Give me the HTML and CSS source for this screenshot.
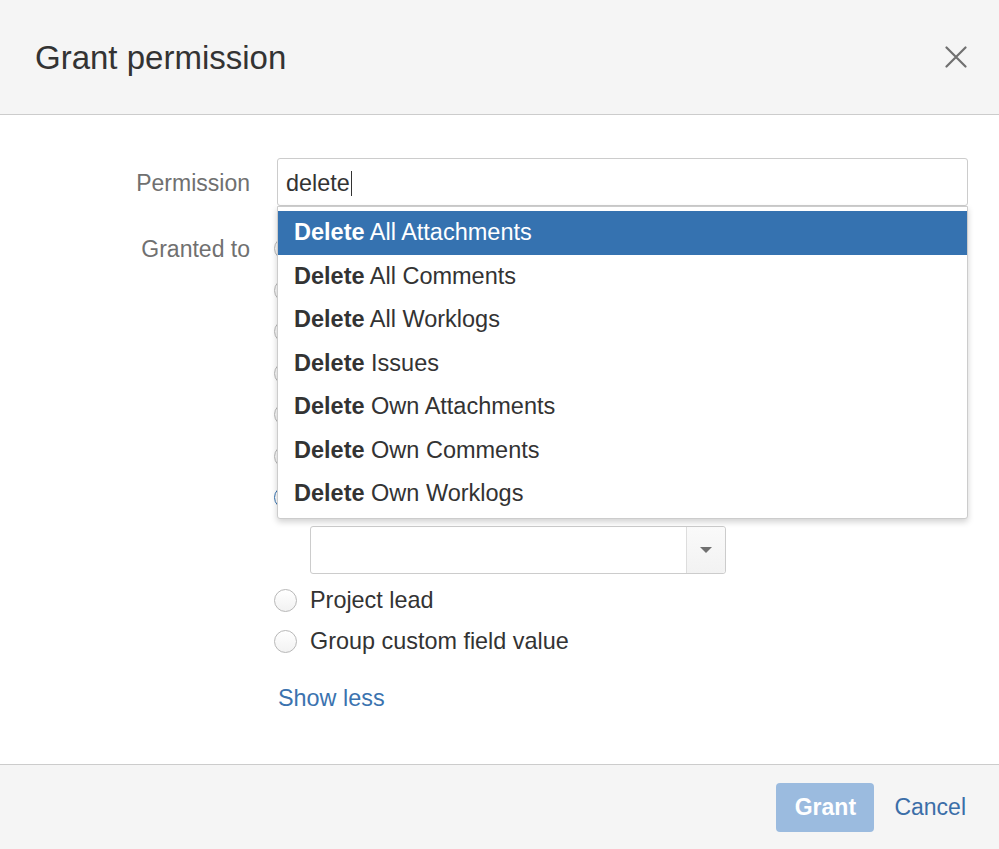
FILE: index.html
```html
<!DOCTYPE html>
<html lang="en">
<head>
<meta charset="utf-8">
<title>Grant permission</title>
<link rel="stylesheet" href="styles.css">
</head>
<body>
<div class="dialog">
  <header class="dlg-head">
    <h2 class="dlg-title">Grant permission</h2>
    <button class="close" aria-label="Close">
      <svg width="22" height="22" viewBox="0 0 22 22"><path d="M1.5 1.5 L20.5 20.5 M20.5 1.5 L1.5 20.5" stroke="#707070" stroke-width="2.2" fill="none" stroke-linecap="round"/></svg>
    </button>
  </header>
  <main class="dlg-body">
    <div class="row perm-row">
      <div class="lbl lbl-perm">Permission</div>
      <div class="field perm-field">
        <div class="input">delete<span class="caret"></span></div>
        <ul class="suggest">
          <li class="opt active"><b>Delete</b> All Attachments</li>
          <li class="opt"><b>Delete</b> All Comments</li>
          <li class="opt"><b>Delete</b> All Worklogs</li>
          <li class="opt"><b>Delete</b> Issues</li>
          <li class="opt"><b>Delete</b> Own Attachments</li>
          <li class="opt"><b>Delete</b> Own Comments</li>
          <li class="opt"><b>Delete</b> Own Worklogs</li>
        </ul>
      </div>
    </div>
    <div class="row grant-row">
      <div class="lbl lbl-grant">Granted to</div>
      <div class="field">
        <ul class="radios">
          <li class="radio"><span class="dot"></span></li>
          <li class="radio"><span class="dot"></span></li>
          <li class="radio"><span class="dot"></span></li>
          <li class="radio"><span class="dot"></span></li>
          <li class="radio"><span class="dot"></span></li>
          <li class="radio"><span class="dot"></span></li>
          <li class="radio"><span class="dot checked"></span></li>
        </ul>
        <div class="select">
          <span class="select-val"></span>
          <span class="select-arrow"><span class="tri"></span></span>
        </div>
        <ul class="radios">
          <li class="radio"><span class="dot"></span>Project lead</li>
          <li class="radio"><span class="dot"></span>Group custom field value</li>
        </ul>
        <a class="more" href="#">Show less</a>
      </div>
    </div>
  </main>
  <footer class="dlg-foot">
    <button class="btn-grant" disabled>Grant</button>
    <a class="cancel" href="#">Cancel</a>
  </footer>
</div>
</body>
</html>
```

FILE: styles.css
```css
* { box-sizing: border-box; }
html, body { margin: 0; padding: 0; }
body {
  font-family: "Liberation Sans", Arial, Helvetica, sans-serif;
  color: #333;
  background: #fff;
}
.dialog {
  width: 999px;
  height: 849px;
  display: flex;
  flex-direction: column;
  overflow: hidden;
}
.dlg-head {
  height: 115px;
  flex: none;
  background: #f5f5f5;
  border-bottom: 1px solid #cccccc;
  display: flex;
  align-items: center;
  justify-content: space-between;
  padding: 0 32px 0 35px;
}
.dlg-title {
  margin: 0;
  font-size: 33px;
  font-weight: normal;
  color: #333;
  line-height: 1;
  padding-top: 1px;
}
.close {
  border: 0;
  background: none;
  padding: 0;
  width: 22px;
  height: 22px;
  display: flex;
  cursor: pointer;
}
.dlg-body {
  flex: 1;
  padding-top: 43px;
}
.row {
  display: grid;
  grid-template-columns: 250px 691px;
  column-gap: 27px;
}
.lbl {
  text-align: right;
  font-size: 23px;
  color: #707070;
}
.lbl-perm { line-height: 46px; padding-top: 2px; height: 48px; }
.lbl-grant { line-height: 43px; }
.perm-field { position: relative; height: 48px; }
.input {
  height: 48px;
  border: 1px solid #cccccc;
  border-radius: 3px;
  padding: 0 8px;
  font-size: 23.4px;
  line-height: 48px;
  color: #333;
  background: #fff;
  overflow: hidden;
}
.caret {
  display: inline-block;
  width: 1px;
  height: 25px;
  background: #333;
  vertical-align: -5px;
  margin-left: 1px;
}
.suggest {
  position: absolute;
  z-index: 5;
  top: 48px;
  left: 0;
  width: 691px;
  margin: 0;
  padding: 4px 0 2px;
  list-style: none;
  background: #fff;
  border: 1px solid #cccccc;
  border-radius: 0 0 3px 3px;
  box-shadow: 0 3px 6px rgba(0, 0, 0, 0.18);
}
.opt {
  height: 43.5px;
  line-height: 43.5px;
  padding-left: 16px;
  font-size: 23.5px;
  color: #333;
  white-space: nowrap;
}
.opt b { font-weight: bold; }
.opt.active {
  background: #3572b0;
  color: #fff;
}
.grant-row { margin-top: 22px; }
.radios {
  margin: 0;
  padding: 0;
  list-style: none;
}
.radio {
  height: 41.5px;
  display: flex;
  align-items: center;
  font-size: 23.4px;
  color: #333;
  margin-left: -3px;
}
.dot {
  width: 23px;
  height: 23px;
  border-radius: 50%;
  border: 1px solid #b8b8b8;
  background: linear-gradient(#ffffff, #f2f2f2);
  margin-right: 13px;
  flex: none;
}
.dot.checked {
  border-color: #3572b0;
  background: radial-gradient(circle, #3572b0 0 4px, #ffffff 5px);
}
.select {
  width: 416px;
  height: 48px;
  margin: 7px 0 6px 33px;
  border: 1px solid #cccccc;
  border-radius: 3px;
  display: flex;
  background: #fff;
}
.select-val { flex: 1; }
.select-arrow {
  width: 39px;
  border-left: 1px solid #dddddd;
  background: linear-gradient(#fafafa, #f2f2f2);
  border-radius: 0 3px 3px 0;
  display: flex;
  align-items: center;
  justify-content: center;
}
.tri {
  width: 0;
  height: 0;
  border-left: 6px solid transparent;
  border-right: 6px solid transparent;
  border-top: 6px solid #707070;
}
.more {
  display: inline-block;
  margin-top: 22px;
  font-size: 23.4px;
  line-height: 27px;
  color: #3b73af;
  text-decoration: none;
  margin-left: 1px;
}
.dlg-foot {
  height: 85px;
  flex: none;
  background: #f5f5f5;
  border-top: 1px solid #cccccc;
  display: flex;
  align-items: center;
  justify-content: flex-end;
  gap: 20px;
  padding: 0 33px 0 0;
}
.btn-grant {
  height: 49px;
  width: 98px;
  border: 0;
  border-radius: 4px;
  background: #9bbbdf;
  color: #ffffff;
  font-family: inherit;
  font-size: 23px;
  font-weight: bold;
  padding: 0;
  margin-top: 1px;
}
.cancel {
  font-size: 23px;
  color: #3b6ea8;
  text-decoration: none;
}
```
